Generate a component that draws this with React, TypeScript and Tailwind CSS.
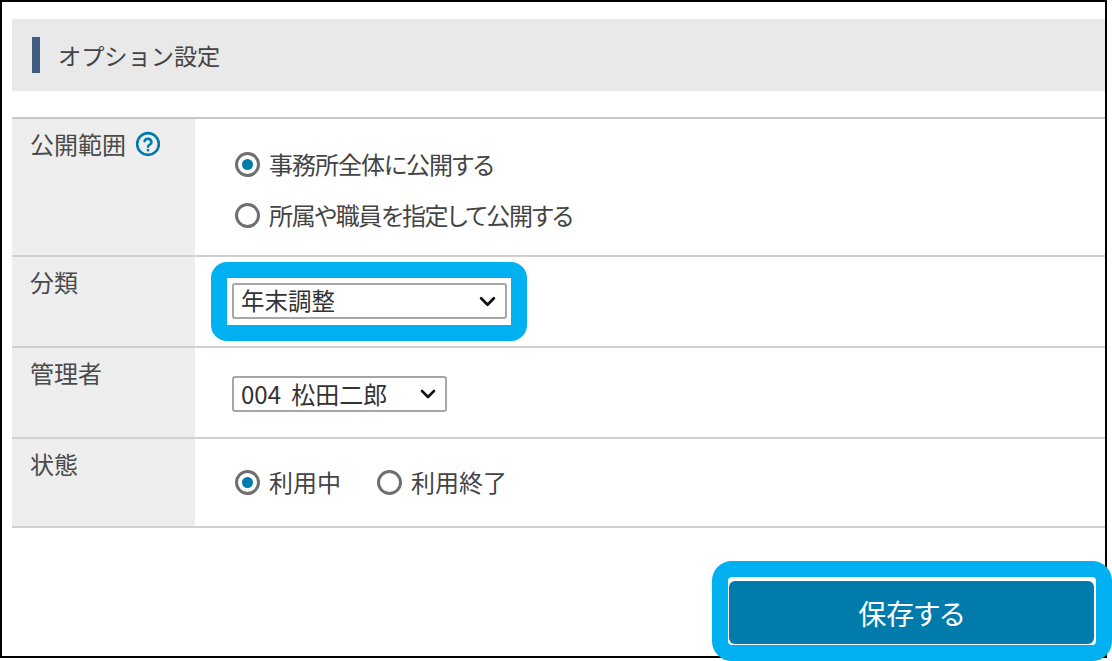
const FONT = "font-['Meiryo','Noto_Sans_CJK_JP','Noto_Sans',sans-serif] [font-feature-settings:'palt']";

const Radio = ({ label, checked, tracking = '' }: { label: string; checked?: boolean; tracking?: string }) => (
  <span className="flex items-center gap-[9px]">
    <span className="flex h-[25px] w-[25px] items-center justify-center rounded-full border-[3px] border-[#6f6f6f] bg-white">
      {checked && <span className="h-[11px] w-[11px] rounded-full bg-[#007bab]" />}
    </span>
    <span className={`text-[24px] leading-[30px] text-[#444] ${tracking}`}>{label}</span>
  </span>
);

const Chevron = ({ className }: { className: string }) => (
  <svg viewBox="0 0 16 10" className={className} fill="none" stroke="#111" strokeWidth="2.6" strokeLinecap="round" strokeLinejoin="round">
    <path d="M2 2l6 6 6-6" />
  </svg>
);

const Row = ({ label, className, children }: { label: React.ReactNode; className: string; children: React.ReactNode }) => (
  <div className={`flex border-b-2 border-[#d0d0d0] ${className}`}>
    <div className="w-[183px] shrink-0 bg-[#eeeeee] pl-[18px] pt-[8px] text-[24px] leading-[34px] text-[#4a4a4a]">{label}</div>
    <div className="min-w-0 flex-1">{children}</div>
  </div>
);

export default function App() {
  return (
    <div className={`relative h-[661px] w-[1112px] overflow-hidden bg-white ${FONT}`}>
      <div className="h-[658px] w-[1107px] border-2 border-black pl-[10px] pt-[17px]">
        <div className="flex h-[72px] items-center bg-[#e9e9e9] pl-[20px]">
          <span className="h-[36px] w-[8px] bg-[#3f5d80]" />
          <h1 className="ml-[18px] text-[23.2px] font-normal text-[#444] [font-feature-settings:normal]">オプション設定</h1>
        </div>

        <div className="mt-[26px] border-t-2 border-[#c8c8c8]">
          <Row
            className="h-[138px]"
            label={
              <span className="flex items-center gap-[9px]">
                公開範囲
                <svg viewBox="0 0 24 24" className="h-[26px] w-[26px]" fill="none" stroke="#007bab" strokeWidth="2.4" strokeLinecap="round">
                  <circle cx="12" cy="12" r="10" />
                  <path d="M8.8 9.4a3.3 3.3 0 0 1 6.4.9c0 2.2-3.2 2.5-3.2 4.2" />
                  <path d="M12 17.6v.2" />
                </svg>
              </span>
            }
          >
            <div className="flex flex-col gap-[21px] pl-[40px] pt-[30px]">
              <Radio label="事務所全体に公開する" checked tracking="tracking-[-1px]" />
              <Radio label="所属や職員を指定して公開する" tracking="tracking-[-1.3px]" />
            </div>
          </Row>

          <Row className="h-[91px]" label="分類">
            <div className="ml-[16px] mt-[5px] h-[79px] w-[316px] rounded-[16px] border-[16px] border-[#00b0f0] bg-white p-[5px_5px]">
              <div className="flex h-[36px] w-[275px] items-center justify-between rounded-[3px] border-2 border-[#a6a6a6] bg-white pl-[7px] pr-[9px]">
                <span className="text-[23.5px] text-[#333]">年末調整</span>
                <Chevron className="h-[11px] w-[17px]" />
              </div>
            </div>
          </Row>

          <Row className="h-[91px]" label="管理者">
            <div className="ml-[37px] mt-[28px] flex h-[36px] w-[215px] items-center justify-between rounded-[3px] border-2 border-[#a6a6a6] bg-white pl-[7px] pr-[9px]">
              <span className="text-[24px] leading-[30px] text-[#333] [word-spacing:5px]">004 松田二郎</span>
              <Chevron className="h-[10px] w-[16px]" />
            </div>
          </Row>

          <Row className="h-[89px]" label="状態">
            <div className="flex gap-[36px] pl-[40px] pt-[28px]">
              <Radio label="利用中" checked />
              <Radio label="利用終了" />
            </div>
          </Row>
        </div>
      </div>

      {/* callout around the save button, drawn over the frame */}
      <div className="absolute left-[712px] top-[561px] h-[100px] w-[400px] rounded-[20px] border-[16px] border-[#00b0f0] bg-white pl-[1px] pt-[4px]">
        <button type="button" className="flex h-[63px] w-[365px] items-center justify-center rounded-[6px] bg-[#007bab] text-[28px] text-white">
          保存する
        </button>
      </div>
    </div>
  );
}
